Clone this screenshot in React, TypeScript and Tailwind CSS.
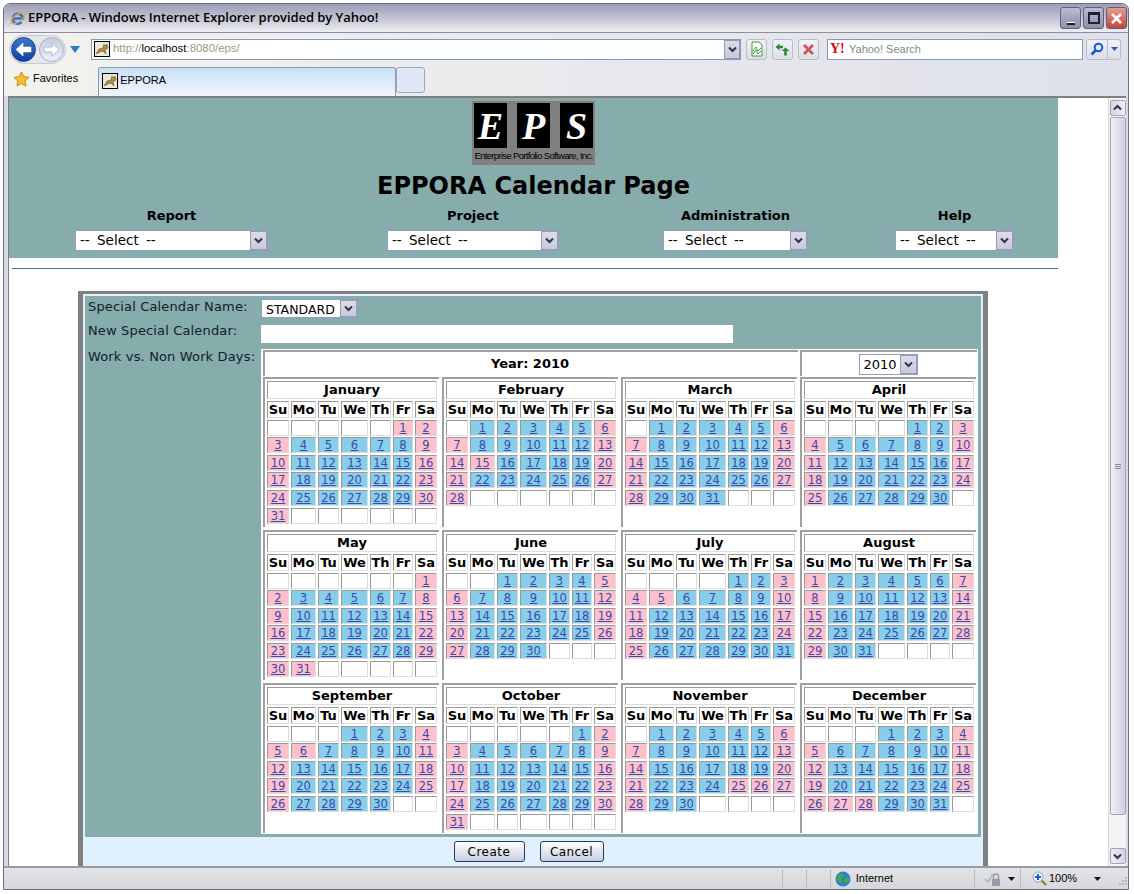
import React from "react";

const months = [
  { name: "January", start: 5, days: 31, off: [1, 2, 3, 9, 10, 16, 17, 23, 24, 30, 31] },
  { name: "February", start: 1, days: 28, off: [6, 7, 13, 14, 15, 20, 21, 27, 28] },
  { name: "March", start: 1, days: 31, off: [6, 7, 13, 14, 20, 21, 27, 28] },
  { name: "April", start: 4, days: 30, off: [3, 4, 10, 11, 17, 18, 24, 25] },
  { name: "May", start: 6, days: 31, off: [1, 2, 8, 9, 15, 16, 22, 23, 29, 30, 31] },
  { name: "June", start: 2, days: 30, off: [5, 6, 12, 13, 19, 20, 26, 27] },
  { name: "July", start: 4, days: 31, off: [3, 4, 5, 10, 11, 17, 18, 24, 25] },
  { name: "August", start: 0, days: 31, off: [1, 7, 8, 14, 15, 21, 22, 28, 29] },
  { name: "September", start: 3, days: 30, off: [4, 5, 6, 11, 12, 18, 19, 25, 26] },
  { name: "October", start: 5, days: 31, off: [2, 3, 9, 10, 16, 17, 23, 24, 30, 31] },
  { name: "November", start: 1, days: 30, off: [6, 7, 13, 14, 20, 21, 25, 26, 27, 28] },
  { name: "December", start: 3, days: 31, off: [4, 5, 11, 12, 18, 19, 25, 26, 27, 28] },
];

const weekdays = ["Su", "Mo", "Tu", "We", "Th", "Fr", "Sa"];

const inset = "border border-t-[#999] border-l-[#999] border-r-[#ddd] border-b-[#ddd]";

const Chevron = () => (
  <svg width="9" height="7" viewBox="0 0 9 7">
    <path d="M1 1.5 L4.5 5 L8 1.5" fill="none" stroke="#33334a" strokeWidth="2" />
  </svg>
);

const FakeSelect = ({ label, className, textClass }: { label: string; className: string; textClass: string }) => (
  <div className={`flex items-stretch bg-white border border-[#8e9fc6] ${className}`}>
    <span className={`flex-1 pl-[4px] leading-[19px] text-black whitespace-nowrap overflow-hidden ${textClass}`}>
      {label}
    </span>
    <span className="w-[17px] flex items-center justify-center border border-[#9a9ab8] bg-linear-to-b from-[#dcdce8] to-[#c8c9da]">
      <Chevron />
    </span>
  </div>
);

const placeholder = "text-[13.5px] [word-spacing:3px]";

const Tomcat = () => (
  <span className="w-[16px] h-[16px] border border-black bg-white flex items-center justify-center shrink-0">
    <svg width="14" height="14" viewBox="0 0 14 14">
      <rect width="14" height="14" fill="#efe9da" />
      <path d="M1 12 L4 7 L8 6 L9 2 L10 4 L12 2 L13 6 L10 8 L11 12 L8 9 L5 10 Z" fill="#b08a4a" stroke="#6b5226" strokeWidth="0.6" />
    </svg>
  </span>
);

const MonthCard = ({ month }: { month: (typeof months)[number] }) => {
  const total = Math.ceil((month.start + month.days) / 7) * 7;
  const cells = Array.from({ length: total }, (_, i) => {
    const day = i - month.start + 1;
    return day >= 1 && day <= month.days ? day : 0;
  });
  return (
    <div className="border-t-2 border-l-2 border-[#a0a0a0] pt-[2px] pl-[2px] pr-[2px]">
      <div className={`${inset} h-[18px] text-center text-[13px] font-bold leading-[16px] text-black`}>
        {month.name}
      </div>
      <div className="grid grid-cols-[22px_25px_21px_27px_21px_20px_22px] gap-x-[2px] gap-y-[1.6px] mt-[2px]">
        {weekdays.map((d) => (
          <div key={d} className={`${inset} h-[17px] overflow-hidden text-center text-[13px] font-bold leading-[15px] text-black`}>
            {d}
          </div>
        ))}
        {cells.map((day, i) => {
          const bg = day === 0 ? "bg-white" : month.off.includes(day) ? "bg-[#ffc0cb]" : "bg-[#87ceeb]";
          return (
            <div key={i} className={`${inset} ${bg} h-[16px] text-center text-[11.5px] leading-[15px] text-[#3b4ba8] underline`}>
              {day === 0 ? "" : day}
            </div>
          );
        })}
      </div>
    </div>
  );
};

const ToolButton = ({ children }: { children: React.ReactNode }) => (
  <span className="w-[21px] h-[21px] rounded-[3px] border border-[#b8bccb] bg-linear-to-b from-[#f2f3f7] to-[#dcdee8] flex items-center justify-center">
    {children}
  </span>
);

const WinButton = ({ children, className }: { children: React.ReactNode; className: string }) => (
  <span className={`w-[21px] h-[22px] rounded-[3px] border border-[#5f607c] flex items-center justify-center ${className}`}>
    {children}
  </span>
);

const NavBall = ({ dir, on }: { dir: string; on: boolean }) => (
  <span className={`w-[25px] h-[25px] rounded-full border flex items-center justify-center ${on ? "border-[#1c3f94] bg-linear-to-b from-[#3f79c9] to-[#0f3fa0]" : "border-[#a9b0c2] bg-linear-to-b from-[#c3cee0] to-[#e8f0fa]"}`}>
    <svg width="17" height="15" viewBox="0 0 17 15">
      <path
        d={dir === "left" ? "M1 7.5 L8 1 V5 H16 V10 H8 V14 Z" : "M16 7.5 L9 1 V5 H1 V10 H9 V14 Z"}
        fill="#fff"
        stroke={on ? "#fff" : "#8d9ab0"}
        strokeWidth="0.6"
      />
    </svg>
  </span>
);

const Sep = ({ className }: { className: string }) => <span className={`w-px h-[19px] bg-[#b9bac4] ${className}`} />;

export default function App() {
  return (
    <div className="w-[1134px] h-[894px] bg-white pl-[3px] pr-[5px] pt-[3px] overflow-hidden font-['DejaVu_Sans',sans-serif]">
      <div className="h-[887px] flex flex-col border border-[#6c6d8a] rounded-t-[7px] bg-[#e2e3ea] overflow-hidden">
        {/* title bar */}
        <div className="h-[28px] shrink-0 flex items-center pl-[5px] pr-[1px] bg-linear-to-b from-[#9c9db6] via-[#c2c3d2] to-[#eeeef2]">
          <svg width="18" height="18" viewBox="0 0 18 18" className="shrink-0">
            <path d="M4.2 9.5 H13.8 A5 5 0 1 0 12.6 13" fill="none" stroke="#2b78d0" strokeWidth="2.6" />
            <ellipse cx="9" cy="9" rx="8.4" ry="3.6" fill="none" stroke="#e8a33c" strokeWidth="1.3" transform="rotate(-35 9 9)" />
          </svg>
          <span className="ml-[1px] text-[13px] font-semibold tracking-[-0.06px] text-black font-['Open_Sans',sans-serif] whitespace-nowrap">
            EPPORA - Windows Internet Explorer provided by Yahoo!
          </span>
          <span className="ml-auto flex gap-[2px]">
            <WinButton className="bg-linear-to-b from-[#b9bbd0] to-[#8f91ab]">
              <span className="w-[8px] h-[3px] mt-[10px] bg-[#1c1c2a] border-t border-white" />
            </WinButton>
            <WinButton className="bg-linear-to-b from-[#b9bbd0] to-[#8f91ab]">
              <span className="w-[12px] h-[12px] border-2 border-t-[3px] border-[#20202e]" />
            </WinButton>
            <WinButton className="bg-linear-to-b from-[#e89a90] to-[#c0453c]">
              <svg width="13" height="13" viewBox="0 0 13 13">
                <path d="M2 2 L11 11 M11 2 L2 11" stroke="#fff" strokeWidth="2.6" />
              </svg>
            </WinButton>
          </span>
        </div>

        {/* nav row */}
        <div className="h-[33px] shrink-0 flex items-center pl-[5px] pr-[5px] border-t border-[#8d8ea6] bg-linear-to-r from-[#f2f2ee] to-[#dfe1ea]">
          <span className="flex items-center gap-[3px] rounded-full border border-[#c6c8d2] bg-[#e6e7ec] p-px">
            <NavBall dir="left" on />
            <NavBall dir="right" on={false} />
          </span>
          <svg width="10" height="7" viewBox="0 0 10 7" className="ml-[4px] shrink-0">
            <path d="M0 0 H10 L5 7 Z" fill="#2a7fc8" />
          </svg>
          <span className="ml-[11px] w-[650px] h-[21px] shrink-0 flex items-center bg-white border border-[#7f9db9] pl-[2px]">
            <Tomcat />
            <span className="ml-[3px] text-[11.4px] text-[#9a9a86] font-['Liberation_Sans',sans-serif]">
              http://<span className="text-black">localhost</span>:8080/eps/
            </span>
            <span className="ml-auto w-[16px] h-[19px] flex items-center justify-center border border-[#9a9ab8] bg-linear-to-b from-[#dcdce8] to-[#c8c9da]">
              <Chevron />
            </span>
          </span>
          <span className="ml-[5px] flex gap-[5px]">
            <ToolButton>
              <svg width="14" height="16" viewBox="0 0 14 16">
                <path d="M2 1 H9 L12 4 V15 H2 Z" fill="#fff" stroke="#3d9a3d" />
                <path d="M3 10 L6 6 L8 10 L11 7 M3 13 L6 9 L8 13 L11 10" fill="none" stroke="#3d9a3d" />
              </svg>
            </ToolButton>
            <ToolButton>
              <svg width="15" height="15" viewBox="0 0 15 15">
                <path d="M0.5 5 L4.5 1.5 V3.8 H8 V6.2 H4.5 V8.5 Z" fill="#2f8a2f" />
                <path d="M14.5 9 L10.5 5.5 L6.5 9 H9.2 V13.5 H11.8 V9 Z" fill="#2f8a2f" />
              </svg>
            </ToolButton>
            <ToolButton>
              <svg width="13" height="13" viewBox="0 0 13 13">
                <path d="M2 2 L11 11 M11 2 L2 11" stroke="#c8555a" strokeWidth="2.6" />
              </svg>
            </ToolButton>
          </span>
          <span className="ml-[8px] w-[256px] h-[21px] shrink-0 flex items-center bg-white border border-[#7f9db9] pl-[2px]">
            <span className="w-[17px] text-[14px] leading-none font-black text-[#e2001a] font-['Liberation_Serif',serif]">Y!</span>
            <span className="ml-[2px] text-[11px] text-[#8a8a8a] font-['Liberation_Sans',sans-serif]">Yahoo! Search</span>
          </span>
          <span className="ml-[3px] w-[35px] h-[21px] rounded-[3px] flex border border-[#b8bccb] bg-linear-to-b from-[#f2f3f7] to-[#dcdee8]">
            <span className="w-[21px] flex items-center justify-center border-r border-[#b8bccb]">
              <svg width="14" height="14" viewBox="0 0 14 14">
                <circle cx="8.5" cy="5.5" r="3.8" fill="none" stroke="#1c57d8" strokeWidth="2" />
                <path d="M5.5 8.5 L1.5 12.5" stroke="#1c57d8" strokeWidth="2.6" />
              </svg>
            </span>
            <span className="flex-1 flex items-center justify-center">
              <svg width="7" height="4" viewBox="0 0 7 4"><path d="M0 0 H7 L3.5 4 Z" fill="#1c57d8" /></svg>
            </span>
          </span>
        </div>

        {/* favorites and tabs */}
        <div className="h-[31px] shrink-0 flex items-end pl-[9px] bg-linear-to-r from-[#f2f2ee] to-[#dfe1ea]">
          <span className="h-[28px] flex items-center gap-[3px] self-center -mt-[4px]">
            <svg width="17" height="16" viewBox="0 0 17 16" className="shrink-0">
              <path d="M8.5 1 L10.8 5.7 L16 6.4 L12.2 10 L13.1 15 L8.5 12.6 L3.9 15 L4.8 10 L1 6.4 L6.2 5.7 Z" fill="#f6c02c" stroke="#c98a16" />
            </svg>
            <span className="text-[11px] text-black font-['Liberation_Sans',sans-serif]">Favorites</span>
          </span>
          <span className="ml-[20px] w-[298px] h-[29px] flex items-center pl-[3px] pb-[3px] rounded-t-[3px] border border-b-0 border-[#8a9ab4] bg-linear-to-b from-[#c8dff7] to-[#f2f6fc]">
            <Tomcat />
            <span className="ml-[2px] text-[11px] text-black font-['Liberation_Sans',sans-serif]">EPPORA</span>
          </span>
          <span className="w-[29px] h-[26px] mb-[3px] rounded-[3px] border border-[#9aa6bc] bg-[#dfe9f6]" />
        </div>

        {/* page area */}
        <div className="h-[770px] shrink-0 flex pl-[4px] pr-[2px] bg-[#d8d9e2]">
          <div className="flex-1 flex border-t-2 border-l border-[#808080] overflow-hidden bg-white">
            <div className="w-[1099px] h-[768px] overflow-hidden shrink-0">
              {/* site header */}
              <div className="w-[1049px] h-[160px] bg-[#87acac] flex flex-col items-center pt-[3px]">
                <div className="w-[123px] h-[64px] bg-[#808080] flex flex-col items-center pt-[2px]">
                  <div className="flex gap-[10px]">
                    {["E", "P", "S"].map((l) => (
                      <span key={l} className="w-[33px] h-[45px] bg-black flex items-center justify-center text-white italic font-bold text-[38px] leading-none font-['Liberation_Serif',serif]">
                        {l}
                      </span>
                    ))}
                  </div>
                  <span className="mt-[2px] text-[9.5px] leading-[11px] text-black whitespace-nowrap tracking-[-0.67px] font-['Liberation_Sans',sans-serif]">
                    Enterprise Portfolio Software, Inc.
                  </span>
                </div>
                <h1 className="mt-[5px] text-[24px] leading-[32px] font-bold text-black">EPPORA Calendar Page</h1>
                <div className="w-full flex mt-[5px] pl-[66px]">
                  <div className="w-[193px] flex flex-col items-center">
                    <span className="text-[13px] font-bold leading-[18px] mb-[5px]">Report</span>
                    <FakeSelect label="-- Select --" textClass={placeholder} className="w-full h-[21px]" />
                  </div>
                  <div className="w-[172px] ml-[119px] flex flex-col items-center">
                    <span className="text-[13px] font-bold leading-[18px] mb-[5px]">Project</span>
                    <FakeSelect label="-- Select --" textClass={placeholder} className="w-full h-[21px]" />
                  </div>
                  <div className="w-[145px] ml-[104px] flex flex-col items-center">
                    <span className="text-[13px] font-bold leading-[18px] mb-[5px]">Administration</span>
                    <FakeSelect label="-- Select --" textClass={placeholder} className="w-full h-[21px]" />
                  </div>
                  <div className="w-[119px] ml-[87px] flex flex-col items-center">
                    <span className="text-[13px] font-bold leading-[18px] mb-[5px]">Help</span>
                    <FakeSelect label="-- Select --" textClass={placeholder} className="w-full h-[21px]" />
                  </div>
                </div>
              </div>
              <div className="ml-[3px] w-[1046px] h-px mt-[10px] bg-[#41709f]" />

              {/* calendar form */}
              <div className="ml-[69px] mt-[22px] w-[910px] border-x-[5px] border-t-[3px] border-[#808080] bg-[#e0f0ff] pt-[2px] px-[2px] pb-[8px]">
                <div className="bg-[#87acac] h-[541px] flex pr-[3px] pb-[3px]">
                  <div className="w-[176px] shrink-0 pl-[3px] pt-[2px] text-[13px] leading-[18px] text-[#10202a] tracking-[0.15px]">
                    <p>Special Calendar Name:</p>
                    <p className="mt-[6px]">New Special Calendar:</p>
                    <p className="mt-[8px]">Work vs. Non Work Days:</p>
                  </div>
                  <div className="flex-1 flex flex-col pt-[3px]">
                    <FakeSelect label="STANDARD" textClass="text-[12.5px]" className="w-[97px] h-[19px]" />
                    <div className="mt-[7px] w-[472px] h-[18px] bg-white" />
                    <div className="mt-[6px] flex-1 bg-white pl-[2px] pt-px">
                      <div className="flex gap-[2px] h-[26px]">
                        <div className="w-[535px] pr-[3px] border-t-2 border-l-2 border-[#a0a0a0] text-center text-[13px] font-bold leading-[24px]">
                          Year: 2010
                        </div>
                        <div className="w-[177px] border-t-2 border-l-2 border-[#a0a0a0] flex justify-center pt-[2px] pr-[3px]">
                          <FakeSelect label="2010" textClass="text-[13px]" className="w-[59px] h-[21px]" />
                        </div>
                      </div>
                      <div className="grid grid-cols-[176px_176px_176px_176px] gap-x-[3px] auto-rows-[150px] gap-y-[3px] mt-px">
                        {months.map((m) => (
                          <MonthCard key={m.name} month={m} />
                        ))}
                      </div>
                    </div>
                  </div>
                </div>
                <div className="flex justify-center gap-[15px] pt-[4px] pr-[9px]">
                  <button className="w-[71px] h-[21px] rounded-[3px] border border-[#1c3c6c] bg-linear-to-b from-white to-[#c9cde0] text-[12px] tracking-[0.5px] leading-none text-black">Create</button>
                  <button className="w-[64px] h-[21px] rounded-[3px] border border-[#1c3c6c] bg-linear-to-b from-white to-[#c9cde0] text-[12px] tracking-[0.4px] leading-none text-black">Cancel</button>
                </div>
              </div>
            </div>

            {/* scrollbar */}
            <div className="w-[18px] shrink-0 flex flex-col items-center bg-[#f4f4f6] border-l border-[#d6d6de] py-[2px]">
              <span className="w-[16px] h-[16px] rounded-[2px] border border-[#a3a4b8] bg-linear-to-r from-[#eeeef4] to-[#d4d5e2] flex items-center justify-center rotate-180">
                <Chevron />
              </span>
              <span className="w-[16px] h-[698px] mt-px rounded-[2px] border border-[#a3a4b8] bg-linear-to-r from-[#f0f0f5] to-[#cfd0df] flex items-center justify-center">
                <span className="w-[6px] h-[5px] border-y border-[#8a8a9e] flex items-center">
                  <span className="w-full h-px bg-[#8a8a9e]" />
                </span>
              </span>
              <span className="w-[16px] h-[16px] mt-auto rounded-[2px] border border-[#a3a4b8] bg-linear-to-r from-[#eeeef4] to-[#d4d5e2] flex items-center justify-center">
                <Chevron />
              </span>
            </div>
          </div>
        </div>

        {/* status bar */}
        <div className="h-[23px] shrink-0 flex items-center border-t-2 border-[#9a9aa4] bg-linear-to-b from-[#e3e4e8] to-[#d6d7dc] text-[11px] text-black font-['Liberation_Sans',sans-serif]">
          <Sep className="ml-[778px]" />
          <Sep className="ml-[23px]" />
          <Sep className="ml-[23px]" />
          <svg width="16" height="16" viewBox="0 0 16 16" className="ml-[4px] shrink-0">
            <circle cx="8" cy="8" r="7.5" fill="#2f7fd0" />
            <path d="M3 4 L7 2 L9 5 L6 8 L7 11 L5 13 L2 9 Z M10 7 L14 6 L14 10 L11 13 L9 10 Z" fill="#4ea83a" />
          </svg>
          <span className="ml-[5px] w-[129px]">Internet</span>
          <Sep className="" />
          <svg width="18" height="16" viewBox="0 0 18 16" className="ml-[9px] shrink-0">
            <path d="M1 8 L4 11 L9 3" fill="none" stroke="#b9bac4" strokeWidth="2" />
            <rect x="8" y="8" width="8" height="7" fill="#9a9aa4" />
            <path d="M9.5 8 V5.5 A2.5 2.5 0 0 1 14.5 5.5 V8" fill="none" stroke="#9a9aa4" strokeWidth="1.4" />
          </svg>
          <svg width="7" height="4" viewBox="0 0 7 4" className="ml-[6px] shrink-0"><path d="M0 0 H7 L3.5 4 Z" fill="#111" /></svg>
          <Sep className="ml-[5px]" />
          <svg width="15" height="15" viewBox="0 0 15 15" className="ml-[11px] shrink-0">
            <path d="M9 9 L14 14" stroke="#a07a3a" strokeWidth="2.4" />
            <circle cx="6" cy="6" r="5" fill="#eef4fb" stroke="#8ea4bc" />
            <path d="M6 3 V9 M3 6 H9" stroke="#1c57d8" strokeWidth="2" />
          </svg>
          <span className="ml-[2px]">100%</span>
          <svg width="7" height="4" viewBox="0 0 7 4" className="ml-[17px] shrink-0"><path d="M0 0 H7 L3.5 4 Z" fill="#111" /></svg>
          <svg width="12" height="12" viewBox="0 0 12 12" className="ml-[15px] mt-[6px] shrink-0">
            <path d="M9 1 h2 v2 h-2z M6 4 h2 v2 h-2z M9 4 h2 v2 h-2z M3 7 h2 v2 h-2z M6 7 h2 v2 h-2z M9 7 h2 v2 h-2z" fill="#b5b6c0" />
          </svg>
        </div>
      </div>
    </div>
  );
}
